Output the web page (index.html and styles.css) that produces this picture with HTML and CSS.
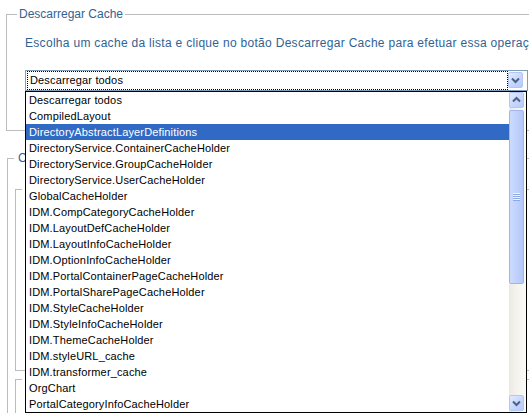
FILE: index.html
```html
<!DOCTYPE html>
<html lang="pt">
<head>
<meta charset="utf-8">
<title>Descarregar Cache</title>
<link rel="stylesheet" href="styles.css">
</head>
<body>
<div class="page">
  <fieldset class="fs fs1">
    <legend class="legend legend1">Descarregar Cache</legend>
    <p class="desc">Escolha um cache da lista e clique no botão Descarregar Cache para efetuar essa operação.</p>
    <div class="select">
      <div class="sel-value">Descarregar todos</div>
      <div class="sel-btn">
        <svg width="13" height="14" viewBox="0 0 13 14"><path d="M3 5.5 L6.5 9 L10 5.5" fill="none" stroke="#4d6185" stroke-width="2"/></svg>
      </div>
    </div>
  </fieldset>

  <fieldset class="fs fs2">
    <legend class="legend legend2">C</legend>
    <fieldset class="fs fs3">
      <legend class="legend legend3"><span class="gap"></span></legend>
      <div class="fs3-body"></div>
    </fieldset>
    <fieldset class="fs fs4">
      <legend class="legend legend3"><span class="gap"></span></legend>
      <div class="fs4-body"></div>
    </fieldset>
  </fieldset>

  <div class="dropdown">
    <div class="items">
      <div class="item">Descarregar todos</div>
      <div class="item">CompiledLayout</div>
      <div class="item sel">DirectoryAbstractLayerDefinitions</div>
      <div class="item">DirectoryService.ContainerCacheHolder</div>
      <div class="item">DirectoryService.GroupCacheHolder</div>
      <div class="item">DirectoryService.UserCacheHolder</div>
      <div class="item">GlobalCacheHolder</div>
      <div class="item">IDM.CompCategoryCacheHolder</div>
      <div class="item">IDM.LayoutDefCacheHolder</div>
      <div class="item">IDM.LayoutInfoCacheHolder</div>
      <div class="item">IDM.OptionInfoCacheHolder</div>
      <div class="item">IDM.PortalContainerPageCacheHolder</div>
      <div class="item">IDM.PortalSharePageCacheHolder</div>
      <div class="item">IDM.StyleCacheHolder</div>
      <div class="item">IDM.StyleInfoCacheHolder</div>
      <div class="item">IDM.ThemeCacheHolder</div>
      <div class="item">IDM.styleURL_cache</div>
      <div class="item">IDM.transformer_cache</div>
      <div class="item">OrgChart</div>
      <div class="item">PortalCategoryInfoCacheHolder</div>
    </div>
    <div class="scrollbar">
      <div class="sb-btn sb-up">
        <svg width="13" height="14" viewBox="0 0 13 14"><path d="M3 8.5 L6.5 5 L10 8.5" fill="none" stroke="#4d6185" stroke-width="2"/></svg>
      </div>
      <div class="sb-thumb"><div class="grip"></div></div>
      <div class="sb-space"></div>
      <div class="sb-btn sb-down">
        <svg width="13" height="14" viewBox="0 0 13 14"><path d="M3 5.5 L6.5 9 L10 5.5" fill="none" stroke="#4d6185" stroke-width="2"/></svg>
      </div>
    </div>
  </div>
</div>
</body>
</html>
```
FILE: styles.css
```css
html, body {
  margin: 0;
  padding: 0;
  background: #ffffff;
}
body {
  font-family: "Liberation Sans", Arial, sans-serif;
  overflow: hidden;
}
.page {
  position: relative;
  width: 529px;
  height: 413px;
  overflow: hidden;
  padding-top: 7px;
  box-sizing: border-box;
}
.fs {
  min-width: 0;
  border: 1px solid #bcbcbc;
  margin: 0;
}
.legend {
  font-size: 12px;
  line-height: 14px;
  color: #2f6394;
  white-space: nowrap;
}
.fs1 {
  margin-left: 6px;
  width: 620px;
  padding: 0 0 39px 18px;
}
.legend1 {
  margin-left: -8px;
  padding: 0 2px;
}
.desc {
  margin: 15px 0 0;
  font-size: 12px;
  line-height: 14px;
  letter-spacing: 0.3px;
  color: #2f6394;
  white-space: nowrap;
}
.select {
  margin-top: 20px;
  width: 503px;
  height: 21px;
  box-sizing: border-box;
  border: 1px solid #7f9db9;
  display: flex;
  padding: 0 4px 0 1px;
  background: #fff;
}
.sel-value {
  width: 481px;
  height: 19px;
  box-sizing: border-box;
  border: 1px dotted #000;
  font-size: 11px;
  line-height: 17px;
  letter-spacing: 0.15px;
  padding-left: 2px;
  color: #000;
  white-space: nowrap;
}
.sel-btn {
  width: 15px;
  height: 16px;
  margin-top: 1px;
  box-sizing: border-box;
  border: 1px solid #b3c7f6;
  border-radius: 2px;
  background: linear-gradient(135deg, #e3ebff 0%, #c6d6fc 55%, #b6cbfa 100%);
  display: flex;
  align-items: center;
  justify-content: center;
}
.sel-btn svg, .sb-btn svg { display: block; }

.fs2 {
  margin-top: 20px;
  margin-left: 7px;
  width: 620px;
  padding: 0 0 0 7px;
  height: 400px;
}
.legend2 {
  margin-left: -1px;
  padding: 0 4px;
}
.fs3 {
  margin-top: 17px;
  width: 600px;
  padding: 0;
}
.legend3 {
  margin-left: 6px;
  padding: 0;
}
.gap {
  display: inline-block;
  width: 60px;
  height: 14px;
  vertical-align: top;
}
.fs3-body { height: 174px; }
.fs4 {
  margin-top: 1px;
  width: 600px;
  padding: 0;
}
.fs4-body { height: 200px; }

.dropdown {
  position: absolute;
  left: 25px;
  top: 91px;
  width: 502px;
  height: 322px;
  box-sizing: border-box;
  border: 1px solid #000;
  background: #fff;
  display: flex;
}
.items {
  width: 483px;
  overflow: hidden;
}
.item {
  height: 16px;
  line-height: 16px;
  font-size: 11px;
  letter-spacing: 0.15px;
  padding-left: 3px;
  white-space: nowrap;
  color: #000;
}
.item.sel {
  background: #316ac5;
  color: #fff;
}
.scrollbar {
  width: 17px;
  display: flex;
  flex-direction: column;
  background: linear-gradient(90deg, #ebe9e0 0%, #f3f1ec 35%, #fbfbf8 100%);
}
.sb-btn {
  width: 15px;
  height: 16px;
  box-sizing: border-box;
  border: 1px solid #b3c7f6;
  border-radius: 2px;
  background: linear-gradient(135deg, #e3ebff 0%, #c6d6fc 55%, #b6cbfa 100%);
  display: flex;
  align-items: center;
  justify-content: center;
}
.sb-up { margin-top: 0; }
.sb-down { margin-bottom: 1px; }
.sb-thumb {
  margin-top: 2px;
  width: 15px;
  height: 174px;
  box-sizing: border-box;
  border: 1px solid #9fb5ec;
  border-radius: 2px;
  background: linear-gradient(90deg, #cddbfe 0%, #c0d2fc 50%, #b4c8f8 100%);
  display: flex;
  align-items: center;
  justify-content: center;
}
.grip {
  width: 7px;
  height: 8px;
  background: repeating-linear-gradient(180deg, #eef3ff 0 1px, #8ea9ea 1px 2px);
}
.sb-space { flex: 1; }
```
